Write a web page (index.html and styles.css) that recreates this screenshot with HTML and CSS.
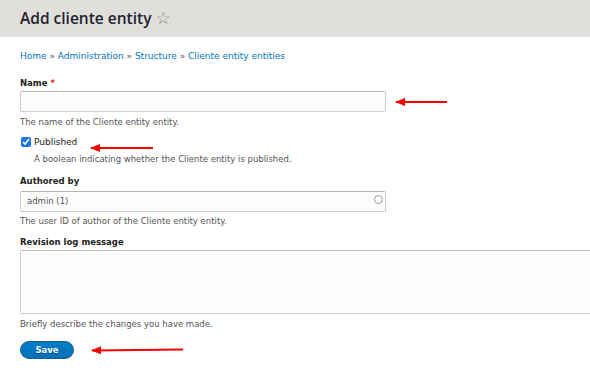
FILE: index.html
```html
<!DOCTYPE html>
<html lang="en">
<head>
    <meta charset="UTF-8">
    <meta name="viewport" content="width=device-width, initial-scale=1.0">
    <title>Add cliente entity</title>
    <link rel="stylesheet" href="styles.css">
</head>
<body>
    <div class="page-header">
        <h1>Add cliente entity <span class="star">&#9734;</span></h1>
    </div>
    <div class="content">
        <div class="breadcrumb">
            <a href="#">Home</a> &raquo; <a href="#">Administration</a> &raquo; <a href="#">Structure</a> &raquo; <a href="#">Cliente entity entities</a>
        </div>

        <form class="entity-form">
            <div class="form-item item-name">
                <label>Name <span class="required">*</span></label>
                <div class="field-row">
                    <input type="text" class="form-text">
                    <span class="note-arrow arrow-name"></span>
                </div>
                <div class="description">The name of the Cliente entity entity.</div>
            </div>

            <div class="form-item item-status">
                <label class="option"><input type="checkbox" checked> Published</label>
                <span class="note-arrow arrow-status"></span>
                <div class="description indent">A boolean indicating whether the Cliente entity is published.</div>
            </div>

            <div class="form-item item-author">
                <label>Authored by</label>
                <div class="autocomplete">
                    <input type="text" class="form-text" value="admin (1)">
                    <span class="throbber"></span>
                </div>
                <div class="description">The user ID of author of the Cliente entity entity.</div>
            </div>

            <div class="form-item item-log">
                <label>Revision log message</label>
                <textarea class="form-textarea"></textarea>
                <div class="description">Briefly describe the changes you have made.</div>
            </div>

            <div class="form-actions">
                <button type="button" class="button-primary">Save</button>
                <span class="note-arrow arrow-save"></span>
            </div>
        </form>
    </div>
</body>
</html>
```

FILE: styles.css
```css
body {
    margin: 0;
    font-family: "DejaVu Sans", sans-serif;
    color: #333;
    background: #fff;
    overflow: hidden;
}

.page-header {
    background-color: #e0dfdb;
    height: 37px;
    padding-left: 20px;
}

.page-header h1 {
    margin: 0;
    font-family: "Open Sans", sans-serif;
    font-weight: 600;
    font-size: 15.5px;
    line-height: 37px;
    color: #222330;
}

.star {
    font-family: "DejaVu Sans", sans-serif;
    font-weight: normal;
    font-size: 17px;
    color: #8a8580;
}

.content {
    padding: 0 20px;
}

.breadcrumb {
    margin-top: 13px;
    font-size: 9px;
    line-height: 12px;
    color: #555;
}

.breadcrumb a {
    color: #0074bd;
    text-decoration: none;
}

.form-item label {
    display: block;
    font-weight: bold;
    font-size: 8.5px;
    line-height: 12px;
    color: #222;
}

.required {
    color: #e32700;
}

.item-name {
    margin-top: 15px;
}

.field-row {
    display: flex;
    align-items: center;
    margin-top: 2px;
}

.form-text {
    box-sizing: border-box;
    width: 366px;
    height: 21px;
    margin: 0;
    padding: 0 6px;
    border: 1px solid #ccc;
    border-top-color: #b8b8b8;
    border-radius: 2px;
    background: #fcfcfa;
    font-family: "DejaVu Sans", sans-serif;
    font-size: 8.5px;
    color: #555;
}

.description {
    font-size: 8.5px;
    line-height: 12px;
    color: #555;
    margin-top: 4px;
}

.description.indent {
    margin-top: 5px;
    padding-left: 14px;
}

.item-status {
    margin-top: 8px;
    position: relative;
}

.form-item label.option {
    display: flex;
    align-items: center;
    font-weight: normal;
    font-size: 9px;
}

.option input {
    width: 10px;
    height: 10px;
    margin: 0 3px 0 1px;
    accent-color: #1a73e8;
}

.item-author {
    margin-top: 10px;
}

.autocomplete {
    position: relative;
    width: 366px;
    margin-top: 2px;
}

.throbber {
    position: absolute;
    right: 3px;
    top: 6px;
    width: 7px;
    height: 7px;
    border: 1px solid #9a9a9a;
    border-radius: 50%;
}

.item-author .description {
    margin-top: 3px;
}

.item-log {
    margin-top: 9px;
}

.form-textarea {
    display: block;
    box-sizing: border-box;
    width: 572px;
    height: 64px;
    margin-top: 2px;
    border: 1px solid #ccc;
    border-top-color: #b8b8b8;
    border-radius: 2px;
    background: #fcfcfa;
    resize: none;
}

.form-actions {
    margin-top: 11px;
    display: flex;
    align-items: center;
}

.button-primary {
    width: 54px;
    height: 18px;
    padding: 0;
    border: 1px solid #1e5c90;
    border-radius: 10px;
    background: linear-gradient(#007bc6, #0071b8);
    color: #fff;
    font-family: "DejaVu Sans", sans-serif;
    font-weight: bold;
    font-size: 8.5px;
    text-shadow: 0 1px 0 rgba(0, 0, 0, 0.3);
}

/* red annotation arrows */
.note-arrow {
    position: relative;
    display: block;
    height: 2px;
    background: #f00;
}

.note-arrow::before {
    content: "";
    position: absolute;
    left: -1px;
    top: -3px;
    border-right: 10px solid #f00;
    border-top: 4px solid transparent;
    border-bottom: 4px solid transparent;
}

.arrow-name {
    width: 51px;
    margin-left: 10px;
}

.arrow-status {
    position: absolute;
    left: 71px;
    top: 11px;
    width: 62px;
}

.arrow-save {
    width: 91px;
    margin-left: 18px;
    transform: rotate(-0.5deg);
}
```
